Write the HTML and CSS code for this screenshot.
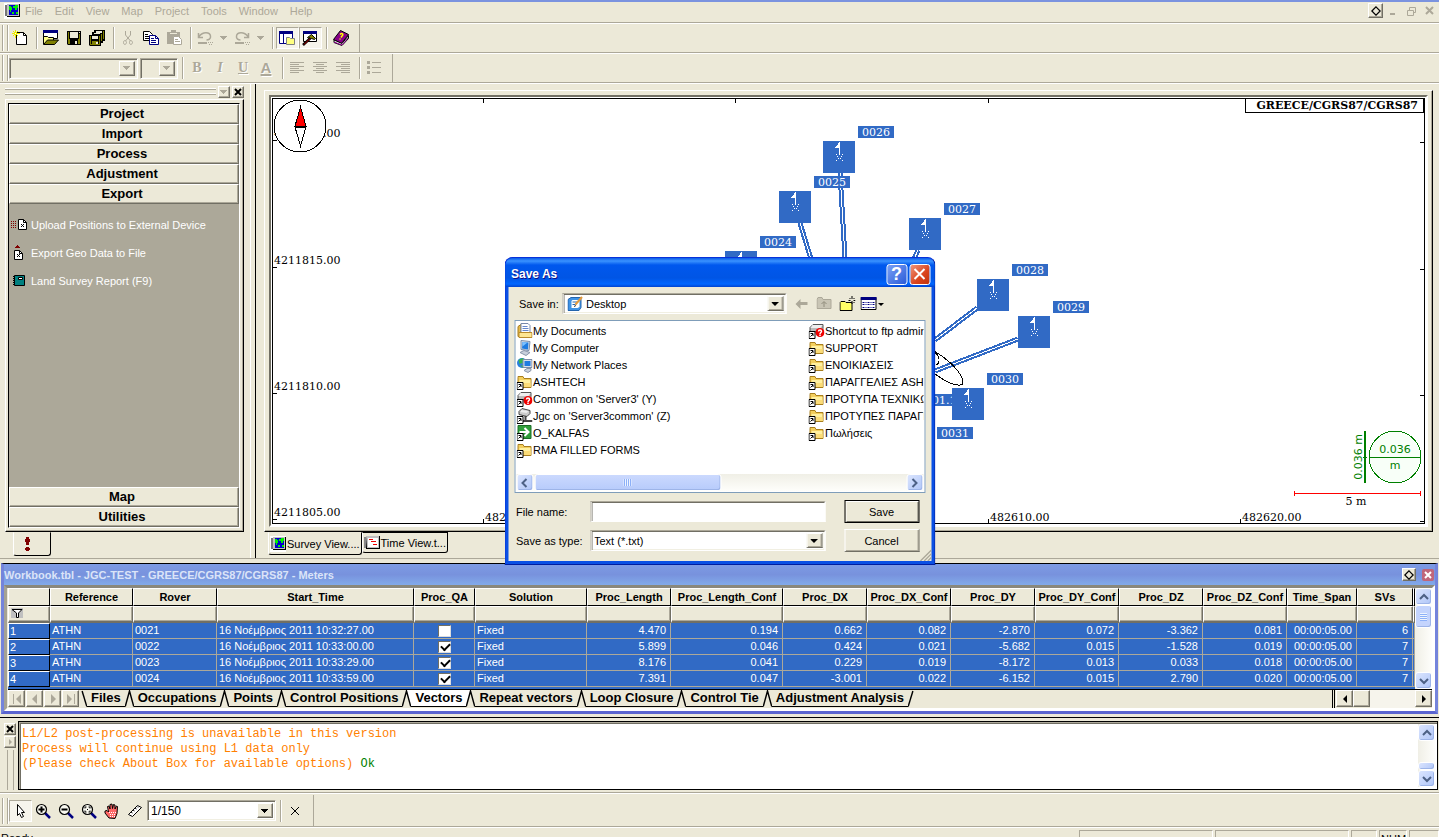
FILE: index.html
```html
<!DOCTYPE html>
<html lang="en">
<head>
<meta charset="utf-8">
<title>Survey Project</title>
<link rel="stylesheet" href="styles.css">
</head>
<body>
<svg class="defs" aria-hidden="true">
  <defs>
    <symbol id="globe" viewBox="0 0 16 16"><path fill="#fff" d="M0 0h16v16H0z"/><path fill="#777" d="M1 2h2v11H1z"/><path fill="#000" d="M3 1h13v13H3z"/><path fill="#c0c0c0" d="M3 1h12v12H3z"/><path fill="#00c" d="M5 2h9v10H5z"/><path fill="#0e0" d="M5 3h2v1h1v3H7v2H6V7H5zM9 3h1v2H9zM11 2h3v3h-1v2h-2V5h-1V3h1zM12 9h2v2h-2zM8 9h2v2H8z"/></symbol>
    <symbol id="timeicon" viewBox="0 0 16 16"><path fill="#888" d="M0 2h2v11H0z"/><path fill="#000" d="M2 1h14v13H2z"/><path fill="#c0c0c0" d="M2 1h13v12H3z"/><path fill="#fff" d="M4 3h10v9H4z"/><path fill="#e00" d="M5 4h4v1H5zM7 6h5v1H7zM9 9h4v1H9z"/></symbol>
    <symbol id="new" viewBox="0 0 16 16"><path fill="#fff" stroke="#000" d="M4.500 2.500h7l3 3v9h-10z"/><path stroke="#000" fill="none" d="M11.500 2.500v3h3"/><path stroke="#ee0" fill="none" d="M3.500 0v8M0 3.500h8M1 1l5 5M6 1L1 6"/><path fill="#fff" d="M3 3h1v1H3z"/></symbol>
    <symbol id="open" viewBox="0 0 16 16"><path fill="#fff" stroke="#000" d="M.5.500h14v8H.5z"/><path fill="#000080" d="M0 0h15v3H0z"/><path fill="#ff8" stroke="#000" d="M.5 14V6.500h4l1 1h5V10"/><path fill="#808000" stroke="#000" d="M.5 14.500l4-4.500h11l-4 4.500z"/></symbol>
    <symbol id="save" viewBox="0 0 16 16"><path fill="#000" d="M1 1h14v14H2L1 14z"/><path fill="#808000" d="M2 2h1v7h1v1h8V9h1V4h1v10h-2v-4H4v4H2z"/><path fill="#ece9d8" d="M4 2h8v6H4z"/><path fill="#ece9d8" d="M9 11h2v3H9zM13 2h1v1h-1z"/></symbol>
    <symbol id="saveall" viewBox="0 0 16 16"><path fill="#000" d="M5 0h11v11h-2v2h-2v3H1L0 15V5h3V2h2z"/><path fill="#ece9d8" d="M7 1h6v2H7zM5 3h6v1H5zM3 6h6v3H3z"/><path fill="#808000" d="M14 1h1v8h-1zM12 4h1v7h-1zM1 6h1v8h1v-3h6v3h1V6h1v9H1z"/><path fill="#ece9d8" d="M7 12h2v2H7z"/></symbol>
    <symbol id="cut" viewBox="0 0 16 16"><path fill="none" stroke="#aca899" d="M5.500 1v4l5 6M10.500 1v4l-5 6M3.500 12.500c0-3 3-2 3 0s-3 3-3 0M9.500 12.500c0-3 3-2 3 0s-3 3-3 0"/></symbol>
    <symbol id="copy" viewBox="0 0 16 16"><path fill="#fff" stroke="#000" d="M.5 1.500h6l3 3v6h-9z"/><path stroke="#000" d="M2 4.500h3M2 6.500h5M2 8.500h5"/><path fill="#fff" stroke="#000080" d="M6.500 5.500h6l3 3v6h-9z"/><path stroke="#000080" fill="none" d="M12.500 5.500v3h3M8 8.500h3M8 10.500h5M8 12.500h5"/></symbol>
    <symbol id="paste" viewBox="0 0 16 16"><path fill="#aca899" d="M1 2h4V0h5v2h4v5H8v7H1z"/><path fill="#ece9d8" d="M4 3h7v1H4z"/><path fill="#fff" stroke="#aca899" d="M7.500 6.500h5l3 3v5h-8z"/><path stroke="#aca899" d="M9 9.500h3M9 11.500h5"/></symbol>
    <symbol id="undo" viewBox="0 0 16 16"><path fill="none" stroke="#aca899" stroke-width="1.500" d="M2 6.500C6 1 13 2 13.500 6c.5 3-2 4-4 4M1.500 3v4.500H6"/><path fill="#aca899" d="M1 12h9v2H1zM11 12h1v1h-1zM13 12h1v1h-1zM15 12h1v1h-1zM12 14h1v1h-1zM14 14h1v1h-1z"/></symbol>
    <symbol id="redo" viewBox="0 0 16 16"><path fill="none" stroke="#aca899" stroke-width="1.500" d="M14 6.500C10 1 3 2 2.500 6c-.5 3 2 4 4 4M14.500 3v4.500H10"/><path fill="#aca899" d="M1 12h9v2H1zM11 12h1v1h-1zM13 12h1v1h-1zM15 12h1v1h-1zM12 14h1v1h-1zM14 14h1v1h-1z"/></symbol>
    <symbol id="down" viewBox="0 0 8 8"><path fill="currentColor" d="M0 2h7v1H6v1H5v1H4v1H3V5H2V4H1V3H0z"/></symbol>
    <symbol id="panel" viewBox="0 0 16 16"><path fill="#fff" stroke="#000080" d="M.5 1.500h13v12H.5z"/><path fill="#000080" d="M0 1h14v3H0zM4 4h1v9H4z"/><path fill="#ffff80" stroke="#808080" d="M7.500 7.500h3l1 1h4v6h-8z"/></symbol>
    <symbol id="hammer" viewBox="0 0 16 16"><path fill="#fff" stroke="#000" d="M1.500 1.500h13v10h-13z"/><path fill="#000080" d="M1 1h14v3H1z"/><path fill="#808000" stroke="#000" d="M5.500 7.500l4-3 4 4-1 1-3-1-2 .5z"/><path stroke="#000" stroke-width="2.500" d="M8.500 8L1 15"/><path stroke="#b00" d="M8 8.500l-6 6"/></symbol>
    <symbol id="book" viewBox="0 0 16 16"><path fill="#808" stroke="#000" d="M.5 9.500l7-9 8 4-7 9z"/><path fill="#fff" stroke="#000" d="M1 10l8 3.500 6.500-8v3l-6.500 7-8-3z"/><path stroke="#808" fill="none" d="M1 12l8 3 6-7"/><path fill="none" stroke="#ff0" stroke-width="1.500" d="M7 4.500c2-2 4 0 2 1.500L8 7.500M7 8.500v1"/></symbol>
    <symbol id="left" viewBox="0 0 16 16"><path stroke="#aca899" d="M1 2.500h14M1 4.500h9M1 6.500h14M1 8.500h9M1 10.500h14M1 12.500h9"/></symbol>
    <symbol id="center" viewBox="0 0 16 16"><path stroke="#aca899" d="M1 2.500h14M4 4.500h8M1 6.500h14M4 8.500h8M1 10.500h14M4 12.500h8"/></symbol>
    <symbol id="right" viewBox="0 0 16 16"><path stroke="#aca899" d="M1 2.500h14M6 4.500h9M1 6.500h14M6 8.500h9M1 10.500h14M6 12.500h9"/></symbol>
    <symbol id="bullets" viewBox="0 0 16 16"><path fill="#aca899" d="M1 1h3v3H1zM1 6h3v3H1zM1 11h3v3H1zM6 2h9v1H6zM6 7h9v1H6zM6 12h9v1H6z"/></symbol>
    <symbol id="x" viewBox="0 0 8 8"><path fill="none" stroke="currentColor" stroke-width="2" d="M1 1l6 6M7 1L1 7"/></symbol>
    <symbol id="diamond" viewBox="0 0 12 12"><path fill="none" stroke="#000" stroke-width="1.500" d="M6 1l5 5-5 5-5-5z"/></symbol>
    <symbol id="upload" viewBox="0 0 18 16"><path fill="none" stroke="#800000" stroke-dasharray="1 1" d="M1 4.500h6M1 6.500h6M1 8.500h6M1 10.500h6"/><path fill="#fff" stroke="#000" d="M8.500 2.500h5l3 3v7h-8z"/><path fill="none" stroke="#000" d="M13.500 2.500v3h3M11 7l3 3M14 7l-3 3"/></symbol>
    <symbol id="geo" viewBox="0 0 18 16"><path fill="#800000" d="M7 0h1v1h1v1h1v1H5V2h1V1h1z"/><path fill="#fff" stroke="#000" d="M4.500 5.500h5l3 3v6h-8z"/><path fill="none" stroke="#000" d="M9.500 5.500v3h3M7 9l3 3M10 9l-3 3"/></symbol>
    <symbol id="report" viewBox="0 0 18 16"><path fill="#fff" stroke="#000" stroke-dasharray="1 1" d="M3.500 3v10"/><path fill="teal" stroke="#000" d="M4.500 2.500h10v10h-10z"/><path fill="#fff" stroke="#000" d="M8.500 4.500h4v2h-4z"/></symbol>
    <symbol id="pointer" viewBox="0 0 16 16"><path fill="#fff" stroke="#000" d="M5.500 1.500v11l2-2 2 4 2-1-2-4h3z"/></symbol>
    <symbol id="zin" viewBox="0 0 16 16"><path stroke="#000080" stroke-width="2.500" d="M10 10l5 5"/><circle cx="6.500" cy="6.500" r="5" fill="#f8f8f0" stroke="#000" stroke-width="1.200"/><path stroke="#000" stroke-width="2" d="M3.500 6.500h6M6.500 3.500v6"/></symbol>
    <symbol id="zout" viewBox="0 0 16 16"><path stroke="#000080" stroke-width="2.500" d="M10 10l5 5"/><circle cx="6.500" cy="6.500" r="5" fill="#f8f8f0" stroke="#000" stroke-width="1.200"/><path stroke="#000" stroke-width="2" d="M3.500 6.500h6"/></symbol>
    <symbol id="zfit" viewBox="0 0 16 16"><path stroke="#000080" stroke-width="2.500" d="M10 10l5 5"/><circle cx="6.500" cy="6.500" r="5" fill="#f8f8f0" stroke="#000" stroke-width="1.200"/><path stroke="#000" fill="none" d="M4 5.500V4h1.500M7.500 4H9v1.500M9 7.500V9H7.500M5.500 9H4V7.500M6 6.500h1"/></symbol>
    <symbol id="hand" viewBox="0 0 16 16"><path fill="#f66" stroke="#000" d="M5 15L1 10V8l2-.5 1.500 1.500-1-5.500 1.500-.5 1 3V1.500l2-.5.5 4.500 1-4 1.500.5v4l1.500-3 1 .5-.5 7-2 5z"/><path stroke="#fff" stroke-dasharray="1 1" fill="none" d="M5 9.500h7M6 11.500h6M6 13.500h5"/></symbol>
    <symbol id="ruler" viewBox="0 0 16 16"><path fill="#fff" stroke="#000" d="M1.500 11.500l9-9 4 2-9 9z"/><path stroke="#000" d="M4 9l1.500 1M6 7l1.500 1M8 5l1.500 1M10 3.500l1 1"/></symbol>
    <symbol id="node" viewBox="0 0 32 32"><path fill="#316ac5" d="M0 0h32v32H0z"/><path fill="#fff" d="M16 1h1v13h-1zM15 2h1v5h-4V6h1V5h1V4h1zM13 13h1v1h-1zM19 13h1v1h-1zM14 15h1v1h-1zM18 15h1v1h-1zM15 17h1v1h-1zM17 17h1v1h-1zM13 19h1v1h-1zM19 19h1v1h-1z"/></symbol>
    <symbol id="folder" viewBox="0 0 16 16"><path fill="#f3cf5d" stroke="#a97f1e" d="M1.500 3.500v-1h5l1 2h7v9h-13z"/><path fill="#fff0a0" d="M3 6h11v7H3z"/><path fill="#fbdc78" d="M3 9h11v4H3z"/></symbol>
    <symbol id="arrowmark" viewBox="0 0 16 16"><path fill="#fff" stroke="#000" d="M.5 8.500h6v7h-6z"/><path fill="none" stroke="#000" d="M2 13.500l2.500-2.500M2 10.500h2.500V13"/></symbol>
    <symbol id="linkfolder" viewBox="0 0 16 16"><use href="#folder" width="16" height="16"/><use href="#arrowmark" width="16" height="16"/></symbol>
    <symbol id="docs" viewBox="0 0 16 16"><path fill="#e3b94b" stroke="#a77c1c" d="M1.500 3.500l3-2v12h-3z"/><path fill="#fff" stroke="#78a" d="M4.500.5h7l2 2v9h-9z"/><path stroke="#68c" d="M6 3.500h5M6 5.500h6M6 7.500h6"/><path fill="#ffe793" stroke="#b98b2c" d="M2.500 9.500h13v5h-13z"/></symbol>
    <symbol id="computer" viewBox="0 0 16 16"><path fill="#d7dfea" stroke="#7b8da8" d="M4.500.5l9 1-1 9-8-1z"/><path fill="#1f7be0" d="M6 2l6 .5-.5 7-6-1z"/><path fill="#7cc1ff" d="M6 2l5 .5-5 4z"/><path fill="#c8d0dc" stroke="#8794a8" d="M3.500 12.500l4-2 6 2-4 3z"/></symbol>
    <symbol id="network" viewBox="0 0 16 16"><circle cx="5.500" cy="6" r="5" fill="#2a80dd"/><path fill="#38b54a" d="M2 3l4-2 2 2-2 3-3 1zM4 8l3 1-1 2z"/><path fill="#d7dfea" stroke="#7b8da8" d="M6.500 2.500h9v8h-9z"/><path fill="#1f7be0" d="M8 4h6v5H8z"/><path fill="#c8d0dc" stroke="#8794a8" d="M7.500 13.500l3-2h4v2l-3 2z"/></symbol>
    <symbol id="drive" viewBox="0 0 16 16"><path fill="#bbb" stroke="#555" d="M1.500 4.500l3-3h10v4l-1 3h-12z"/><path fill="#eee" d="M4 2h10l-2 3H2z"/><path fill="#3c3" d="M9 6h2v1H9z"/><circle cx="11.500" cy="9.500" r="4.500" fill="#e00"/><path fill="none" stroke="#fff" stroke-width="1.500" d="M10 8.500c0-2 3-2 3 0 0 1-1.500 1-1.500 2.500M11.500 11.500v1.500"/><use href="#arrowmark" width="16" height="16"/></symbol>
    <symbol id="netdrive" viewBox="0 0 16 16"><path fill="#ccc" stroke="#444" d="M2.500 3.500l3-3 8 2v3l-3 3-8-2z"/><path fill="#eee" d="M5 2l7 1-2 2-6-1z"/><path stroke="#444" stroke-width="2" d="M9 8v5M5 13h11"/><use href="#arrowmark" width="16" height="16"/></symbol>
    <symbol id="go" viewBox="0 0 16 16"><path fill="#2f9e3a" stroke="#1c6e26" d="M1.500.5h13v13h-13z"/><path fill="none" stroke="#fff" stroke-width="2" d="M3 7h9M8 3l4 4-4 4"/><use href="#arrowmark" width="16" height="16"/></symbol>
    <symbol id="desktop" viewBox="0 0 16 16"><path fill="#3f93e5" stroke="#2464ad" d="M.5 3.500l3-2h10v10l-2 3h-11z"/><path fill="#fff" d="M5 4h7v7l-2 1H4V5z"/><path fill="none" stroke="#2464ad" d="M5 6h5M5 8.500h3"/><path stroke="#e39a3b" stroke-width="2" d="M14.500 1L8 8.500"/><path stroke="#333" d="M8 9l-1 2"/></symbol>
    <symbol id="back" viewBox="0 0 16 16"><path fill="#aca899" d="M2 8l5-5v3h7v3H7v4z"/></symbol>
    <symbol id="up" viewBox="0 0 16 16"><path fill="#c9c5b5" stroke="#aca899" d="M.5 12.500v-9l1-2h4l1 2h8v9z"/><path fill="none" stroke="#918d7d" d="M7.500 11V6M5 8l2.500-2.500L10 8"/></symbol>
    <symbol id="newfolder" viewBox="0 0 16 16"><path fill="#ff6" stroke="#000" d="M.5 14.500v-8l1-1h4l1 1h6v8z"/><path fill="none" stroke="#000" d="M12.500 0v3M12.500 5v3M9 4.500h2M14 4.500h2M10 2l1 1M15 2l-1 1M10 7l1-1M15 7l-1-1"/></symbol>
    <symbol id="viewmenu" viewBox="0 0 24 16"><path fill="#fff" stroke="#000" d="M.5 1.500h15v12H.5z"/><path fill="#000080" d="M0 1h16v3H0z"/><path stroke="#000080" stroke-dasharray="2 1 1 1" d="M2 6.500h12M2 8.500h12M2 11.500h12"/><path fill="#000" d="M18 7h5v1h-1v1h-1v1h-1V9h-1V8h-1z"/></symbol>
    <symbol id="chevup" viewBox="0 0 10 10"><path fill="none" stroke="#4d6185" stroke-width="2" d="M1 7l4-4 4 4"/></symbol>
    <symbol id="chevdown" viewBox="0 0 10 10"><path fill="none" stroke="#4d6185" stroke-width="2" d="M1 3l4 4 4-4"/></symbol>
    <symbol id="chevleft" viewBox="0 0 10 10"><path fill="none" stroke="#4d6185" stroke-width="2" d="M7 1L3 5l4 4"/></symbol>
    <symbol id="chevright" viewBox="0 0 10 10"><path fill="none" stroke="#4d6185" stroke-width="2" d="M3 1l4 4-4 4"/></symbol>
    <symbol id="tabedge" viewBox="0 0 9 18"><path fill="none" stroke="#000" stroke-width="1.500" d="M0 17.500L4.500 1 9 17.500"/></symbol>
  </defs>
</svg>

<header class="menubar">
  <svg class="icon"><use href="#globe"/></svg>
  <nav class="menus"><button>File</button><button>Edit</button><button>View</button><button>Map</button><button>Project</button><button>Tools</button><button>Window</button><button>Help</button></nav>
  <div class="winbtns">
    <button class="raised dia" aria-label="Dock"><svg class="i10"><use href="#diamond"/></svg></button>
    <button class="flat" aria-label="Minimize"><svg class="i12" viewBox="0 0 12 12"><path fill="#aca899" d="M2 8h5v2H2z"/></svg></button>
    <button class="flat" aria-label="Restore"><svg class="i12" viewBox="0 0 12 12"><path fill="none" stroke="#aca899" d="M1.500 5.500h6v5h-6zM3.500 5V2.500h6v5H8"/></svg></button>
    <button class="flat" aria-label="Close"><svg class="i12" viewBox="0 0 12 12"><path stroke="#aca899" stroke-width="2" d="M2 2l7 7M9 2L2 9"/></svg></button>
  </div>
</header>

<div class="barrow"><div class="toolbar">
  <span class="grip"></span>
  <button class="tb" aria-label="New"><svg class="icon"><use href="#new"/></svg></button><i class="sep"></i>
  <button class="tb" aria-label="Open"><svg class="icon"><use href="#open"/></svg></button><button class="tb" aria-label="Save"><svg class="icon"><use href="#save"/></svg></button><button class="tb" aria-label="Save all"><svg class="icon"><use href="#saveall"/></svg></button><i class="sep"></i>
  <button class="tb" aria-label="Cut"><svg class="icon"><use href="#cut"/></svg></button><button class="tb" aria-label="Copy"><svg class="icon"><use href="#copy"/></svg></button><button class="tb" aria-label="Paste"><svg class="icon"><use href="#paste"/></svg></button><i class="sep"></i>
  <button class="tb" aria-label="Undo"><svg class="icon"><use href="#undo"/></svg></button><button class="tb drop" aria-label="Undo list"><svg class="i8"><use href="#down"/></svg></button><button class="tb" aria-label="Redo"><svg class="icon"><use href="#redo"/></svg></button><button class="tb drop" aria-label="Redo list"><svg class="i8"><use href="#down"/></svg></button><i class="sep"></i>
  <button class="tb on" aria-label="Project panel"><svg class="icon"><use href="#panel"/></svg></button><button class="tb on" aria-label="Workbook"><svg class="icon"><use href="#hammer"/></svg></button><i class="sep"></i>
  <button class="tb" aria-label="Help"><svg class="icon"><use href="#book"/></svg></button>
</div></div>

<div class="barrow"><div class="toolbar">
  <span class="grip"></span>
  <div class="combo off font"><select aria-label="Font" disabled><option></option></select><span class="arrow"><svg class="i8"><use href="#down"/></svg></span></div>
  <div class="combo off size"><select aria-label="Font size" disabled><option></option></select><span class="arrow"><svg class="i8"><use href="#down"/></svg></span></div>
  <i class="sep"></i>
  <button class="tb fmt">B</button><button class="tb fmt it">I</button><button class="tb fmt un">U</button><button class="tb fmt col">A</button><i class="sep"></i>
  <button class="tb" aria-label="Align left"><svg class="icon"><use href="#left"/></svg></button><button class="tb" aria-label="Center"><svg class="icon"><use href="#center"/></svg></button><button class="tb" aria-label="Align right"><svg class="icon"><use href="#right"/></svg></button><i class="sep"></i>
  <button class="tb" aria-label="Bullets"><svg class="icon"><use href="#bullets"/></svg></button>
</div></div>

<main class="work">
  <aside class="side">
    <div class="sidehead"><span class="hgrip"></span><button class="raised tiny dim" aria-label="Panel menu"><svg class="i8"><use href="#down"/></svg></button><button class="raised tiny" aria-label="Close panel"><svg class="i8"><use href="#x"/></svg></button></div>
    <div class="sideframe"><div class="sidelist">
      <button class="cat">Project</button><button class="cat">Import</button><button class="cat">Process</button><button class="cat">Adjustment</button><button class="cat">Export</button>
      <div class="actions">
        <button><svg class="act"><use href="#upload"/></svg>Upload Positions to External Device</button>
        <button><svg class="act"><use href="#geo"/></svg>Export Geo Data to File</button>
        <button><svg class="act"><use href="#report"/></svg>Land Survey Report (F9)</button>
      </div>
      <button class="cat">Map</button><button class="cat">Utilities</button>
    </div></div>
    <button class="alerttab" aria-label="Alerts"><svg class="icon" viewBox="0 0 16 16"><path fill="#800000" d="M6 1h3v2h1v3H9v3H6V6H5V3h1zM6 11h3v1h1v2H9v1H6v-1H5v-2h1z"/></svg></button>
  </aside>

  <section class="view">
    <div class="pane"><div class="sunk"><div class="canvas">
      <svg class="map" role="img" aria-label="Survey map">
        <g transform="translate(-273 -99)" class="px">
          <path stroke="#000" d="M483.500 99v4M735.500 99v4M988.500 99v4M273 140.500h4M273 267.500h4M273 393.500h4M273 519.500h4"/>
          <g class="coord"><text x="274" y="137">4211820.00</text><text x="274" y="264">4211815.00</text><text x="274" y="390">4211810.00</text><text x="274" y="516">4211805.00</text></g>
          <circle cx="300" cy="126" r="26" fill="#fff" stroke="#000"/>
          <path fill="red" stroke="#000" d="M300.500 107l5.500 19h-11z"/><path fill="#fff" stroke="#000" d="M300.500 146l5.500-19h-11z"/>
          <path fill="none" stroke="#316ac5" stroke-width="5" d="M840 173l5 85M800 223l11 36M918 250l-4 9M977 308l-42 32M1018 339l-83 32"/>
          <path fill="none" stroke="#fff" d="M840 173l5 85M800 223l11 36M918 250l-4 9M977 308l-42 32M1018 339l-83 32"/>
          <path fill="none" stroke="#000" d="M930 349c18 9 34 25 33 35-6 4-20-3-34-15M930 350c12 4 10 14 6 15"/>
          <use href="#node" x="823" y="141" width="32" height="32"/><use href="#node" x="779" y="191" width="32" height="32"/><use href="#node" x="725" y="251" width="32" height="32"/><use href="#node" x="909" y="218" width="32" height="32"/><use href="#node" x="977" y="279" width="32" height="32"/><use href="#node" x="1018" y="316" width="32" height="32"/>
          <path fill="#316ac5" d="M858 126h36v12h-36zM814 176h36v12h-36zM760 236h36v12h-36zM944 203h36v12h-36zM1012 264h36v12h-36zM1053 301h36v12h-36zM987 373h36v12h-36zM937 427h36v12h-36zM916 394h40v12h-40z"/>
          <g class="tag"><text x="862" y="136">0026</text><text x="818" y="186">0025</text><text x="764" y="246">0024</text><text x="948" y="213">0027</text><text x="1016" y="274">0028</text><text x="1057" y="311">0029</text><text x="991" y="383">0030</text><text x="941" y="437">0031</text><text x="932" y="404">01.1</text></g>
          <use href="#node" x="952" y="388" width="32" height="32"/>
        </g>
        <svg y="100%" overflow="visible"><g transform="translate(-273 -521)"><path class="px" stroke="#000" d="M483.500 517v4M735.500 517v4M988.500 517v4M1240.500 517v4"/><g class="coord"><text x="485" y="519">482590.00</text><text x="990" y="519">482610.00</text><text x="1242" y="519">482620.00</text></g></g></svg>
        <svg x="100%" y="100%" overflow="visible"><g transform="translate(-1424 -521)">
          <path class="px" stroke="#000" d="M1420 140.500h4M1420 267.500h4M1420 393.500h4M1420 519.500h4"/>
          <circle class="px" cx="1395" cy="455" r="26" fill="#f8fff8" stroke="green"/><path class="px" stroke="green" d="M1369 455.500h52M1363 455.500h4"/><path class="px" fill="green" d="M1364 429h2v52h-2z"/>
          <g class="gauge"><text x="1395" y="451">0.036</text><text x="1395" y="467">m</text><text transform="translate(1362 455) rotate(-90)">0.036 m</text></g>
          <path fill="red" d="M1294 491h127v1h-127zM1294 489h1v5h-1zM1420 489h1v5h-1z"/><text class="scale" x="1356" y="503">5 m</text>
        </g></svg>
      </svg>
      <span class="datum">GREECE/CGRS87/CGRS87</span>
    </div></div></div>
    <div class="viewtabs"><button class="vt cur"><svg class="icon"><use href="#globe"/></svg>Survey View....</button><button class="vt"><svg class="icon"><use href="#timeicon"/></svg>Time View.t...</button></div>
  </section>
</main>

<section class="book">
  <div class="booktitle"><span>Workbook.tbl - JGC-TEST - GREECE/CGRS87/CGRS87 - Meters</span><button class="raised dia" aria-label="Dock workbook"><svg class="i10"><use href="#diamond"/></svg></button><button class="bookx" aria-label="Close workbook"><svg class="i8"><use href="#x"/></svg></button></div>
  <div class="bookbody">
    <div class="gridrow">
      <div class="gridwrap">
        <table>
          <colgroup><col class="w42"><col class="w83"><col class="w84"><col class="w197"><col class="w61"><col class="w112"><col class="w84"><col class="w112"><col class="w84"><col class="w84"><col class="w84"><col class="w84"><col class="w84"><col class="w84"><col class="w70"><col class="w56"><col></colgroup>
          <thead>
            <tr><th></th><th>Reference</th><th>Rover</th><th>Start_Time</th><th>Proc_QA</th><th>Solution</th><th>Proc_Length</th><th>Proc_Length_Conf</th><th>Proc_DX</th><th>Proc_DX_Conf</th><th>Proc_DY</th><th>Proc_DY_Conf</th><th>Proc_DZ</th><th>Proc_DZ_Conf</th><th>Time_Span</th><th>SVs</th><th></th></tr>
            <tr class="filter"><td><svg class="i12" viewBox="0 0 12 12"><path fill="#c0c0c0" d="M0 0h12v10H0z"/><path fill="#fff" stroke="#000" d="M1 1.500h10L7.500 5v4.500h-2V5z"/></svg></td><td></td><td></td><td></td><td></td><td></td><td></td><td></td><td></td><td></td><td></td><td></td><td></td><td></td><td></td><td></td><td></td></tr>
          </thead>
          <tbody>
            <tr><th>1</th><td>ATHN</td><td>0021</td><td>16 Νοέμβριος 2011 10:32:27.00</td><td class="qa"><input type="checkbox" aria-label="QA 1"></td><td>Fixed</td><td>4.470</td><td>0.194</td><td>0.662</td><td>0.082</td><td>-2.870</td><td>0.072</td><td>-3.362</td><td>0.081</td><td>00:00:05.00</td><td>6</td><td></td></tr>
            <tr><th>2</th><td>ATHN</td><td>0022</td><td>16 Νοέμβριος 2011 10:33:00.00</td><td class="qa"><input type="checkbox" aria-label="QA 2" checked></td><td>Fixed</td><td>5.899</td><td>0.046</td><td>0.424</td><td>0.021</td><td>-5.682</td><td>0.015</td><td>-1.528</td><td>0.019</td><td>00:00:05.00</td><td>7</td><td></td></tr>
            <tr><th>3</th><td>ATHN</td><td>0023</td><td>16 Νοέμβριος 2011 10:33:29.00</td><td class="qa"><input type="checkbox" aria-label="QA 3" checked></td><td>Fixed</td><td>8.176</td><td>0.041</td><td>0.229</td><td>0.019</td><td>-8.172</td><td>0.013</td><td>0.033</td><td>0.018</td><td>00:00:05.00</td><td>7</td><td></td></tr>
            <tr><th>4</th><td>ATHN</td><td>0024</td><td>16 Νοέμβριος 2011 10:33:59.00</td><td class="qa"><input type="checkbox" aria-label="QA 4" checked></td><td>Fixed</td><td>7.391</td><td>0.047</td><td>-3.001</td><td>0.022</td><td>-6.152</td><td>0.015</td><td>2.790</td><td>0.020</td><td>00:00:05.00</td><td>7</td><td></td></tr>
          </tbody>
        </table>
      </div>
      <div class="vscroll"><button class="luna" aria-label="Scroll up"><svg class="i10"><use href="#chevup"/></svg></button><span class="luna thumb rows"></span><span class="fill"></span><button class="luna" aria-label="Scroll down"><svg class="i10"><use href="#chevdown"/></svg></button></div>
    </div>
    <div class="sheets">
      <div class="navs"><button class="raised" aria-label="First"><svg class="i10" viewBox="0 0 10 10"><path fill="#aca899" d="M1 0h1v10H1zM9 0v10L4 5z"/></svg></button><button class="raised" aria-label="Previous"><svg class="i10" viewBox="0 0 10 10"><path fill="#aca899" d="M7 0v10L2 5z"/></svg></button><button class="raised" aria-label="Next"><svg class="i10" viewBox="0 0 10 10"><path fill="#aca899" d="M3 0v10l5-5z"/></svg></button><button class="raised" aria-label="Last"><svg class="i10" viewBox="0 0 10 10"><path fill="#aca899" d="M8 0h1v10H8zM1 0v10l5-5z"/></svg></button></div>
      <div class="tabs">
        <svg class="first" viewBox="0 0 6 18"><path fill="none" stroke="#000" stroke-width="1.500" d="M1 1l5 16.500"/></svg><button>Files</button><svg class="edge"><use href="#tabedge"/></svg><button>Occupations</button><svg class="edge"><use href="#tabedge"/></svg><button>Points</button><svg class="edge"><use href="#tabedge"/></svg><button>Control Positions</button><svg class="edge"><path fill="#fff" d="M4.500 0H9v18z"/><use href="#tabedge"/></svg><button class="cur">Vectors</button><svg class="edge"><path fill="#fff" d="M0 0h4.500L0 18z"/><use href="#tabedge"/></svg><button>Repeat vectors</button><svg class="edge"><use href="#tabedge"/></svg><button>Loop Closure</button><svg class="edge"><use href="#tabedge"/></svg><button>Control Tie</button><svg class="edge"><use href="#tabedge"/></svg><button>Adjustment Analysis</button><svg class="last" viewBox="0 0 6 18"><path fill="none" stroke="#000" stroke-width="1.500" d="M0 17.500L5 1"/></svg>
      </div>
      <div class="hs"><button class="raised" aria-label="Scroll left"><svg class="i8" viewBox="0 0 8 8"><path d="M6 0v8L2 4z"/></svg></button><button class="raised" aria-label="Scroll thumb"></button><span class="dither"></span><button class="raised" aria-label="Scroll right"><svg class="i8" viewBox="0 0 8 8"><path d="M2 0v8l4-4z"/></svg></button></div>
    </div>
  </div>
</section>

<section class="output">
  <div class="outside"><button class="raised tiny" aria-label="Close output"><svg class="i8"><use href="#x"/></svg></button><button class="raised tiny" aria-label="Expand"><svg class="i8" viewBox="0 0 8 8"><path fill="#aca899" d="M3 1v6l3-3z"/></svg></button><span class="vgrip"></span></div>
  <div class="console">
    <div class="log"><p>L1/L2 post-processing is unavailable in this version</p><p>Process will continue using L1 data only</p><p>(Please check About Box for available options) <b>Ok</b></p></div>
    <div class="vscroll"><button class="luna" aria-label="Scroll up"><svg class="i10"><use href="#chevup"/></svg></button><span class="fill"></span><span class="luna thumb small"></span><button class="luna" aria-label="Scroll down"><svg class="i10"><use href="#chevdown"/></svg></button></div>
  </div>
</section>

<div class="barrow low"><div class="toolbar">
  <span class="grip"></span>
  <button class="tb on" aria-label="Select"><svg class="icon"><use href="#pointer"/></svg></button><button class="tb" aria-label="Zoom in"><svg class="icon"><use href="#zin"/></svg></button><button class="tb" aria-label="Zoom out"><svg class="icon"><use href="#zout"/></svg></button><button class="tb" aria-label="Zoom to fit"><svg class="icon"><use href="#zfit"/></svg></button><button class="tb" aria-label="Pan"><svg class="icon"><use href="#hand"/></svg></button><button class="tb" aria-label="Measure"><svg class="icon"><use href="#ruler"/></svg></button>
  <div class="combo font"><select aria-label="Scale"><option>1/150</option></select><span class="arrow"><svg class="i8"><use href="#down"/></svg></span></div>
  <i class="sep"></i><button class="tb" aria-label="Clear"><svg class="i8" viewBox="0 0 8 8"><path stroke="#000" d="M0 0l8 8M8 0L0 8"/></svg></button>
</div></div>
<footer class="status"><span class="msg">Ready</span><span class="cell c133"></span><span class="cell c133"></span><span class="cell c26"></span><span class="cell c28">NUM</span><span class="cell c30"></span></footer>

<div class="dialog" role="dialog" aria-label="Save As">
  <div class="dtitle"><span>Save As</span><button class="dq" aria-label="Help">?</button><button class="dx" aria-label="Close"><svg class="i12" viewBox="0 0 12 12"><path stroke="#fff" stroke-width="2" d="M1 1l10 10M11 1L1 11"/></svg></button></div>
  <div class="dbody">
    <div class="savein"><label for="where">Save in:</label><div class="combo where"><svg class="icon"><use href="#desktop"/></svg><select id="where"><option>Desktop</option></select><span class="arrow"><svg class="i8"><use href="#down"/></svg></span></div>
      <button class="tb" aria-label="Back"><svg class="icon"><use href="#back"/></svg></button><button class="tb" aria-label="Up"><svg class="icon"><use href="#up"/></svg></button><button class="tb" aria-label="New folder"><svg class="icon"><use href="#newfolder"/></svg></button><button class="tb vm" aria-label="View menu"><svg class="wide"><use href="#viewmenu"/></svg></button></div>
    <div class="files">
      <div class="cols">
        <ul><li><svg class="icon"><use href="#docs"/></svg>My Documents</li><li><svg class="icon"><use href="#computer"/></svg>My Computer</li><li><svg class="icon"><use href="#network"/></svg>My Network Places</li><li><svg class="icon"><use href="#linkfolder"/></svg>ASHTECH</li><li><svg class="icon"><use href="#drive"/></svg>Common on 'Server3' (Y)</li><li><svg class="icon"><use href="#netdrive"/></svg>Jgc on 'Server3common' (Z)</li><li><svg class="icon"><use href="#go"/></svg>O_KALFAS</li><li><svg class="icon"><use href="#linkfolder"/></svg>RMA FILLED FORMS</li></ul>
        <ul><li><svg class="icon"><use href="#drive"/></svg>Shortcut to ftp admin</li><li><svg class="icon"><use href="#linkfolder"/></svg>SUPPORT</li><li><svg class="icon"><use href="#linkfolder"/></svg>ΕΝΟΙΚΙΑΣΕΙΣ</li><li><svg class="icon"><use href="#linkfolder"/></svg>ΠΑΡΑΓΓΕΛΙΕΣ ASHTECH</li><li><svg class="icon"><use href="#linkfolder"/></svg>ΠΡΟΤΥΠΑ ΤΕΧΝΙΚΩΝ</li><li><svg class="icon"><use href="#linkfolder"/></svg>ΠΡΟΤΥΠΕΣ ΠΑΡΑΓΓΕΛΙΕΣ</li><li><svg class="icon"><use href="#linkfolder"/></svg>Πωλήσεις</li></ul>
      </div>
      <div class="hscroll"><button class="luna" aria-label="Scroll left"><svg class="i10"><use href="#chevleft"/></svg></button><span class="luna thumb wideth"></span><span class="fill"></span><button class="luna" aria-label="Scroll right"><svg class="i10"><use href="#chevright"/></svg></button></div>
    </div>
    <div class="form">
      <label for="fname">File name:</label><input id="fname" type="text"><button class="btn def">Save</button>
      <label for="ftype">Save as type:</label><div class="combo"><select id="ftype"><option>Text (*.txt)</option></select><span class="arrow"><svg class="i8"><use href="#down"/></svg></span></div><button class="btn">Cancel</button>
    </div>
    <svg class="sizer" viewBox="0 0 13 13"><path stroke="#aca899" stroke-width="1.500" d="M1 13L13 1M5 13l8-8M9 13l4-4"/></svg>
  </div>
</div>
</body>
</html>
```

FILE: styles.css
```css
:root {
  --face: #ece9d8;
  --shade: #aca899;
  --dark: #716f64;
  --sel: #316ac5;
}
* { box-sizing: border-box; }
body {
  margin: 0;
  height: 100vh;
  display: flex;
  flex-direction: column;
  overflow: hidden;
  position: relative;
  background: var(--face);
  border-top: 2px solid #7b93df;
  font: 11px/16px "Liberation Sans", Arial, sans-serif;
  color: #000;
}
button, input, select { font: inherit; color: inherit; margin: 0; padding: 0; border: 0; border-radius: 0; background: none; }
svg { display: block; flex: none; }
.defs { position: absolute; width: 0; height: 0; }
.icon { width: 16px; height: 16px; }
.i12 { width: 12px; height: 12px; }
.i10 { width: 10px; height: 10px; }
.i8 { width: 8px; height: 8px; }
.raised {
  display: flex;
  align-items: center;
  justify-content: center;
  background: var(--face);
  border: 1px solid;
  border-color: #fff var(--dark) var(--dark) #fff;
  box-shadow: inset -1px -1px 0 var(--shade);
}

/* menu */
.menubar { flex: none; display: flex; align-items: center; height: 21px; padding: 0 2px 3px 4px; border-bottom: 1px solid var(--shade); }
.menus { flex: 1; display: flex; color: var(--shade); }
.menus button { padding: 0 7px 0 5px; }
.winbtns { display: flex; align-items: center; gap: 5px; }
.winbtns .dia { width: 15px; height: 15px; }
.flat { width: 13px; height: 14px; }

/* toolbars */
.barrow { flex: none; display: flex; border-top: 1px solid #fff; border-bottom: 1px solid var(--shade); height: 30px; }
.toolbar { display: flex; align-items: center; padding: 0 6px 0 2px; border-right: 1px solid var(--shade); }
.grip { width: 6px; height: 26px; margin-right: 1px; border: 1px solid var(--shade); border-width: 0 1px; box-shadow: inset 1px 0 0 #fff, 1px 0 0 #fff; }
.tb { display: flex; align-items: center; justify-content: center; width: 23px; height: 22px; padding-right: 1px; }
.tb.drop { width: 14px; color: var(--shade); }
.tb.on { border: 1px solid; border-color: var(--shade) #fff #fff var(--shade); background: #f6f4ec; }
.sep { width: 8px; height: 22px; flex: none; background: linear-gradient(90deg, transparent 4px, var(--shade) 4px 5px, #fff 5px 6px, transparent 6px); }
.fmt { font: bold 14px/16px "Liberation Serif", serif; color: var(--shade); text-shadow: 1px 1px 0 #fff; }
.fmt.it { font-style: italic; }
.fmt.un { text-decoration: underline; }
.fmt.col { font: bold 15px/14px "Liberation Sans", sans-serif; text-decoration: underline; text-decoration-thickness: 2px; }
.combo {
  position: relative;
  display: flex;
  align-items: center;
  height: 21px;
  background: #fff;
  border: 1px solid;
  border-color: var(--shade) #fff #fff var(--shade);
  box-shadow: inset 1px 1px 0 var(--dark), inset -1px -1px 0 #f1efe2;
}
.combo select { flex: 1; width: 100%; height: 100%; padding: 0 18px 0 3px; appearance: none; outline: 0; }
.combo .arrow {
  position: absolute;
  top: 2px; right: 2px; bottom: 2px;
  width: 16px;
  display: flex;
  align-items: center;
  justify-content: center;
  pointer-events: none;
  background: var(--face);
  border: 1px solid;
  border-color: #fff var(--dark) var(--dark) #fff;
  box-shadow: inset -1px -1px 0 var(--shade);
}
.combo.off { background: var(--face); color: var(--shade); }
.combo.font { width: 129px; }
.combo.size { width: 38px; margin-left: 2px; }
.low .combo select { font-size: 12px; }
.low { height: 34px; padding-top: 1px; }

/* main area */
.work { flex: 1; min-height: 0; display: flex; border-top: 1px solid #fff; border-bottom: 1px solid var(--shade); }
.side { flex: none; display: flex; flex-direction: column; width: 256px; padding: 1px 0 2px 5px; border-right: 1px solid #000; box-shadow: inset -4px 0 0 var(--face), inset -5px 0 0 #fff; }
.sidehead { display: flex; align-items: center; gap: 2px; height: 13px; margin: 0 11px 1px 0; }
.hgrip { flex: 1; height: 6px; border: 1px solid var(--shade); border-width: 1px 0; box-shadow: 0 -1px 0 #fff, inset 0 -1px 0 #fff; }
.tiny { width: 12px; height: 12px; }
.dim { color: var(--shade); }
.sideframe { flex: 1; min-height: 0; display: flex; width: 239px; padding: 3px 3px 3px 2px; border: 1px solid; border-color: #fff #000 #000 #fff; box-shadow: inset -1px -1px 0 var(--shade); }
.sidelist { flex: 1; display: flex; flex-direction: column; border: 1px solid; border-color: #000 #fff #fff #000; background: var(--shade); }
.cat { flex: none; height: 20px; padding-right: 4px; font: bold 13px/16px "Liberation Sans", Arial, sans-serif; background: var(--face); border: 1px solid; border-color: #fff var(--dark) var(--dark) #fff; box-shadow: inset -1px -1px 0 var(--shade); }
.actions { flex: 1; padding: 7px 0 0 1px; color: #fff; }
.actions button { display: flex; align-items: center; gap: 3px; height: 28px; }
.act { width: 18px; height: 16px; }
.alerttab { width: 38px; height: 24px; margin-left: 8px; display: flex; align-items: center; justify-content: center; padding-right: 8px; border: 1px solid; border-color: transparent #000 #000 #fff; border-radius: 0 0 3px 3px; }

.view { flex: 1; min-width: 0; display: flex; flex-direction: column; padding: 6px 6px 2px 8px; }
.pane { flex: 1; min-height: 0; display: flex; padding: 4px; border: 1px solid; border-color: #fff #000 #000 #fff; box-shadow: inset -1px -1px 0 var(--shade); }
.sunk { flex: 1; min-width: 0; display: flex; padding: 1px; border: 2px solid; border-color: var(--dark) #fff #fff var(--dark); background: #fff; }
.canvas { position: relative; flex: 1; min-width: 0; border: 1px solid #000; background: #fff; overflow: hidden; }
.map { position: absolute; inset: 0; width: 100%; height: 100%; }
.px { shape-rendering: crispEdges; }
.coord, .tag { font: 11px "DejaVu Serif", serif; }
.tag { fill: #fff; }
.gauge { font: 11px "DejaVu Sans", sans-serif; fill: green; text-anchor: middle; }
.scale { font: 11px "DejaVu Serif", serif; text-anchor: middle; }
.datum { position: absolute; top: -1px; right: 0; padding: 0 5px 0 10px; border: 1px solid #000; background: #fff; font: bold 11px/13px "DejaVu Serif", serif; }
.viewtabs { display: flex; align-items: flex-start; height: 24px; padding-left: 4px; }
.vt { display: flex; align-items: center; gap: 1px; height: 21px; padding: 0 1px; border: 1px solid; border-color: #000 #000 #000 #fff; border-radius: 0 0 3px 3px; }
.vt.cur { height: 23px; border-color: var(--face) #000 #000 #fff; }

/* workbook */
.book { flex: none; margin: 4px 1px 0 1px; border: 3px solid #7484db; border-top: 1px solid #000; border-bottom-color: #5a65cf; background: var(--face); }
.booktitle { display: flex; align-items: center; height: 21px; padding-right: 1px; color: #dbe4f8; font-weight: bold; background: linear-gradient(#7d9be4, #7892dd 50%, #82aaea); }
.booktitle span { flex: 1; white-space: nowrap; }
.booktitle .dia { width: 14px; height: 13px; margin-right: 6px; }
.bookx { display: flex; align-items: center; justify-content: center; width: 12px; height: 12px; color: #fff; background: #c0667a; border-radius: 2px; }
.bookbody { border: 3px solid; border-color: #8a887c #fff #fff #a5a294; padding-left: 1px; }
.gridrow { display: flex; height: 102px; border-bottom: 1px solid #000; }
.gridwrap { flex: 1; min-width: 0; overflow: hidden; background: var(--sel); }
table { width: 100%; table-layout: fixed; border-collapse: separate; border-spacing: 0; line-height: 14px; }
.w42 { width: 42px; } .w83 { width: 83px; } .w84 { width: 84px; } .w197 { width: 197px; } .w61 { width: 61px; } .w112 { width: 112px; } .w70 { width: 70px; } .w56 { width: 56px; }
th, td { padding: 0 2px; overflow: hidden; white-space: nowrap; }
thead th { height: 18px; background: var(--face); border: 1px solid; border-color: #fff #000 #000 #fff; }
.filter td { height: 17px; background: var(--face); border: 1px solid; border-color: #fff var(--dark) var(--shade) #fff; border-bottom: 2px solid var(--dark); box-shadow: inset -1px -1px 0 var(--shade); }
tbody tr { height: 16px; color: #fff; background: var(--sel); }
tbody td { border-right: 1px solid var(--shade); border-bottom: 1px solid var(--shade); padding: 0 4px 1px 2px; text-align: right; }
tbody td:nth-child(-n+4), tbody td:nth-child(6) { text-align: left; }
tbody th { font-weight: normal; text-align: left; padding: 0 1px; border: 1px solid; border-color: #fff #000 #000 #fff; }
td.qa { padding: 0; text-align: center; }
.qa input { appearance: none; display: block; position: relative; width: 13px; height: 12px; margin: 1px auto 0; background: #fff; border: 1px solid; border-color: var(--dark) #ddd #ddd var(--dark); }
.qa input:checked::before { content: ""; position: absolute; left: 2px; top: 1px; width: 7px; height: 4px; border: solid #000; border-width: 0 0 2px 2px; rotate: -45deg; }
.vscroll { display: flex; flex-direction: column; width: 17px; flex: none; background: linear-gradient(90deg, #f0efe6, #fefefb); }
.luna { flex: none; display: flex; align-items: center; justify-content: center; width: 17px; height: 17px; border: 1px solid #fff; border-radius: 3px; background: linear-gradient(135deg, #dbe5fe, #b0c6f8); box-shadow: inset -1px -1px 0 #9db4e8; }
.fill { flex: 1; }
.rows { height: 23px; background: repeating-linear-gradient(#eef4fe 0 1px, #8cb0f8 1px 2px) center / 7px 8px no-repeat, #c4d4fd; }
.small { height: 8px; }
.sheets { display: flex; height: 18px; }
.navs { display: flex; gap: 1px; }
.navs button, .hs button { width: 17px; height: 17px; flex: none; }
.tabs { flex: 1; min-width: 0; display: flex; overflow: hidden; padding-left: 2px; border-right: 1px solid #000; }
.tabs button { flex: none; height: 17px; padding: 0 4px; font: bold 13px/16px "Liberation Sans", Arial, sans-serif; border-bottom: 1px solid #000; }
.tabs .cur { background: #fff; }
.edge { width: 9px; height: 17px; }
.first, .last { width: 6px; height: 17px; }
.hs { display: flex; width: 99px; padding-left: 3px; background: linear-gradient(90deg, var(--face) 1px, #000 1px 2px, transparent 2px); }
.dither { flex: 1; background: #f6f4ec; }

/* output */
.output { flex: none; display: flex; gap: 2px; height: 79px; padding: 7px 1px 2px 4px; border-bottom: 1px solid var(--shade); background: linear-gradient(var(--face) 3px, #000 3px 4px, var(--face) 4px); }
.outside { display: flex; flex-direction: column; gap: 1px; width: 12px; padding-top: 2px; }
.vgrip { flex: 1; width: 7px; margin: 1px 0 0 3px; border: 1px solid var(--shade); border-width: 0 1px; }
.console { flex: 1; min-width: 0; display: flex; background: #fff; border: 1px solid #000; padding: 2px; box-shadow: inset 1px 1px 0 var(--shade), inset 2px 2px 0 var(--dark); }
.log { flex: 1; min-width: 0; padding: 3px 1px; font: 12px/15px "Liberation Mono", monospace; color: #ff8000; }
.log p { margin: 0; white-space: nowrap; }
.log b { color: green; font-weight: normal; }

/* status */
.status { flex: none; display: flex; align-items: flex-start; gap: 2px; height: 10px; overflow: hidden; padding-top: 2px; border-top: 1px solid #fff; }
.msg { flex: 1; padding-left: 1px; }
.cell { height: 20px; padding-left: 1px; border: 1px solid; border-color: var(--shade) #fff #fff var(--shade); }
.c133 { width: 134px; } .c26 { width: 26px; } .c28 { width: 28px; } .c30 { width: 30px; }

/* dialog */
.dialog { position: absolute; top: 255px; left: 50%; width: 431px; transform: translateX(-50%); background: #0a50e4; border: 1px solid #0831d9; border-bottom-color: #001ea0; border-right-color: #001ea0; border-radius: 8px 8px 0 0; padding: 0 3px 3px; }
.dtitle { display: flex; align-items: center; gap: 2px; height: 29px; margin: 0 -3px; padding: 3px 4px 0 6px; border-radius: 7px 7px 0 0; background: linear-gradient(#0a5be8, #3a93ff 3px, #0058ee 7px, #0055e5 20px, #0066ff 26px, #0043cf); color: #fff; font: bold 12px/16px "Liberation Sans", Arial, sans-serif; text-shadow: 1px 1px 0 #0f1089; }
.dtitle span { flex: 1; }
.dq, .dx { display: flex; align-items: center; justify-content: center; width: 21px; height: 21px; border: 1px solid #fff; border-radius: 3px; background: linear-gradient(135deg, #7aa0f5, #2a5bd8); }
.dq { font-size: 18px; }
.dx { background: linear-gradient(135deg, #f0967c, #d9431c 60%, #c03510); }
.dbody { position: relative; background: var(--face); padding: 6px 6px 9px; }
.savein { display: flex; align-items: center; height: 21px; }
.savein label { width: 48px; padding-left: 5px; white-space: nowrap; }
.where { width: 224px; padding-left: 4px; margin-right: 4px; }
.wide { width: 24px; height: 16px; }
.vm { width: 28px; }
.files { margin-top: 6px; padding: 1px; border: 1px solid #7f9db9; background: #fff; }
.cols { display: flex; height: 152px; overflow: hidden; }
.cols ul { flex: none; width: 292px; margin: 0; padding: 0; list-style: none; }
.cols li { display: flex; align-items: center; gap: 1px; height: 17px; white-space: nowrap; }
.hscroll { display: flex; background: linear-gradient(#f0efe6, #fefefb); }
.wideth { width: 187px; margin-left: 1px; background: repeating-linear-gradient(90deg, #eef4fe 0 1px, #8cb0f8 1px 2px) center / 8px 7px no-repeat, linear-gradient(#cbd9fe, #b7cbfb); }
.form { display: grid; grid-template-columns: 74px 235px 94px; justify-content: start; align-items: center; row-gap: 6px; padding: 7px 0 0 2px; }
.form .btn { margin-left: 19px; width: 75px; height: 23px; background: var(--face); border: 1px solid; border-color: #fff var(--dark) var(--dark) #fff; box-shadow: inset -1px -1px 0 var(--shade); }
.form .def { border-color: #000; box-shadow: inset 1px 1px 0 #fff, inset -1px -1px 0 var(--dark); }
.form input { height: 21px; padding: 0 3px; background: #fff; border: 1px solid; border-color: var(--shade) #fff #fff var(--shade); box-shadow: inset 1px 1px 0 var(--dark); }
.sizer { position: absolute; right: 0; bottom: 0; width: 12px; height: 12px; }
```
